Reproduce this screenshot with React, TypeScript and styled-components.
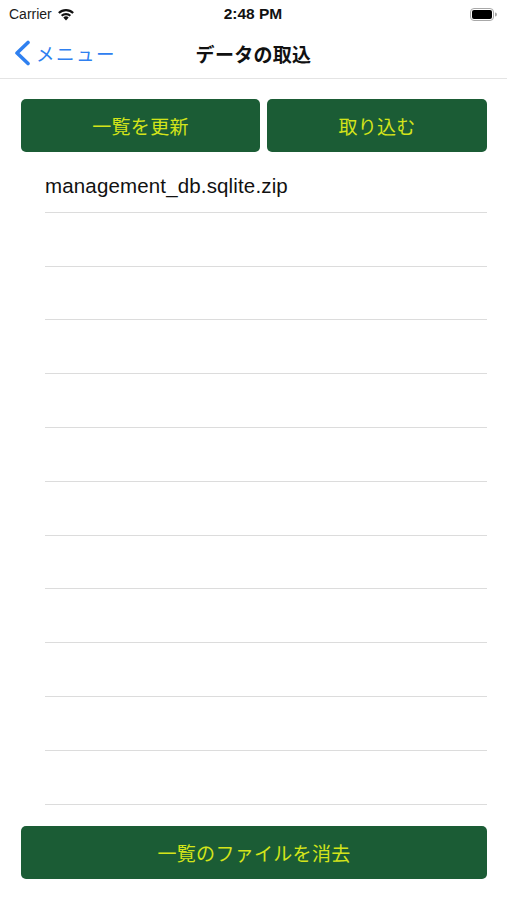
import React from "react";
import styled, { createGlobalStyle } from "styled-components";

const Global = createGlobalStyle`
  html, body { margin: 0; padding: 0; background: #ffffff; }
  body { font-family: "Liberation Sans", "Noto Sans CJK JP", sans-serif; }
  * { box-sizing: border-box; }
`;

const Screen = styled.div`
  width: 507px;
  height: 900px;
  display: flex;
  flex-direction: column;
  background: #ffffff;
  overflow: hidden;
`;

const StatusBar = styled.div`
  height: 28px;
  display: grid;
  grid-template-columns: 1fr auto 1fr;
  align-items: center;
  padding: 0 10px 0 9px;
  font-size: 14px;
  color: #000;
`;

const StatusLeft = styled.div`
  display: flex;
  align-items: center;
  gap: 5px;
  font-family: "Liberation Sans", sans-serif;
  font-size: 14px;
  color: #1a1a1a;
`;

const StatusTime = styled.div`
  font-family: "Liberation Sans", sans-serif;
  font-weight: 700;
  font-size: 15.5px;
  color: #111;
`;

const StatusRight = styled.div`
  display: flex;
  justify-content: flex-end;
  align-items: center;
`;

const NavBar = styled.div`
  height: 51px;
  display: grid;
  grid-template-columns: 1fr auto 1fr;
  align-items: center;
  border-bottom: 1px solid #e4e4e4;
  padding: 0 14px;
`;

const BackButton = styled.div`
  display: flex;
  align-items: center;
  gap: 5px;
  color: #2f80f0;
  font-family: "Noto Sans CJK JP", sans-serif;
  font-size: 18.5px;
  letter-spacing: 1.5px;
`;

const Title = styled.div`
  font-family: "Noto Sans CJK JP", sans-serif;
  font-weight: 700;
  font-size: 19px;
  color: #111;
  letter-spacing: 0.3px;
`;

const Content = styled.div`
  flex: 1;
  display: flex;
  flex-direction: column;
  padding: 20px 20px 0 21px;
`;

const ButtonRow = styled.div`
  display: grid;
  grid-template-columns: 239px 1fr;
  gap: 7px;
`;

const GreenButton = styled.div`
  height: 53px;
  border-radius: 5px;
  background: #1b5c35;
  color: #d3e41a;
  display: flex;
  align-items: center;
  justify-content: center;
  font-family: "Noto Sans CJK JP", sans-serif;
  font-size: 19px;
  letter-spacing: 0.3px;
`;

const List = styled.div`
  display: flex;
  flex-direction: column;
  padding: 7px 0 0 24px;
`;

const Row = styled.div`
  height: 53.8px;
  display: flex;
  align-items: center;
  border-bottom: 1px solid #dcdcdc;
  font-family: "Liberation Sans", sans-serif;
  font-size: 20.5px;
  letter-spacing: 0.15px;
  color: #111;
  padding-top: 2px;
`;

const Footer = styled.div`
  padding-top: 21px;
`;

const Wifi = () => (
  <svg width="18" height="13" viewBox="0 0 18 13">
    <path d="M9 12.6 L6.3 9.6 A4 4 0 0 1 11.7 9.6 Z" fill="#111" />
    <path d="M3.9 7.1 A7.4 7.4 0 0 1 14.1 7.1 L12.6 8.6 A5.3 5.3 0 0 0 5.4 8.6 Z" fill="#111" />
    <path d="M1.1 4.3 A11.4 11.4 0 0 1 16.9 4.3 L15.4 5.8 A9.3 9.3 0 0 0 2.6 5.8 Z" fill="#111" />
  </svg>
);

const Battery = () => (
  <svg width="27" height="13" viewBox="0 0 27 13">
    <rect x="0.5" y="0.5" width="23" height="12" rx="3.5" fill="none" stroke="#a8a8a8" />
    <rect x="2" y="2" width="20" height="9" rx="2" fill="#000" />
    <path d="M25 4.5 A2 2 0 0 1 25 8.5 Z" fill="#a8a8a8" />
  </svg>
);

const Chevron = () => (
  <svg width="17" height="26" viewBox="0 0 17 26">
    <path d="M14 2.5 L3 13 L14 23.5" fill="none" stroke="#2f80f0" strokeWidth="3.6" strokeLinecap="round" strokeLinejoin="round" />
  </svg>
);

export default function App() {
  const rows = Array.from({ length: 12 }, (_, i) => (i === 0 ? "management_db.sqlite.zip" : ""));
  return (
    <>
      <Global />
      <Screen>
        <StatusBar>
          <StatusLeft>
            Carrier
            <Wifi />
          </StatusLeft>
          <StatusTime>2:48 PM</StatusTime>
          <StatusRight>
            <Battery />
          </StatusRight>
        </StatusBar>
        <NavBar>
          <BackButton>
            <Chevron />
            メニュー
          </BackButton>
          <Title>データの取込</Title>
          <div />
        </NavBar>
        <Content>
          <ButtonRow>
            <GreenButton>一覧を更新</GreenButton>
            <GreenButton>取り込む</GreenButton>
          </ButtonRow>
          <List>
            {rows.map((r, i) => (
              <Row key={i}>{r}</Row>
            ))}
          </List>
          <Footer>
            <GreenButton>一覧のファイルを消去</GreenButton>
          </Footer>
        </Content>
      </Screen>
    </>
  );
}
